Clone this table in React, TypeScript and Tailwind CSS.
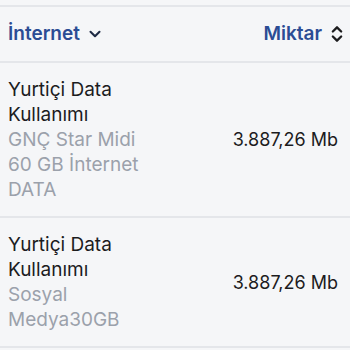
import { ChevronDown, ChevronsUpDown } from "lucide-react";

interface UsageRow {
    title: string;
    detail: string;
    amount: string;
}

const rows: UsageRow[] = [
    { title: "Yurtiçi Data Kullanımı", detail: "GNÇ Star Midi 60 GB İnternet DATA", amount: "3.887,26 Mb" },
    { title: "Yurtiçi Data Kullanımı", detail: "Sosyal Medya30GB", amount: "3.887,26 Mb" },
];

export default function App() {
    return (
        <div className="w-[350px] h-[350px] overflow-hidden bg-[#f5f6f8] pt-[5px]" style={{ fontFamily: "Inter, 'Noto Sans', sans-serif" }}>
            <div className="border-t-2 border-[#e4e6ea]">
                <div className="flex items-center justify-between h-[56px] pl-2 pr-[3px] border-b-2 border-[#e4e6ea] text-[#2b4c94] text-[19px] font-semibold">
                    <div className="flex items-center gap-[6px]">
                        <span>İnternet</span>
                        <ChevronDown className="w-[18px] h-[18px] text-[#1e2a44]" strokeWidth={2.75} />
                    </div>
                    <div className="flex items-center gap-[5px]">
                        <span>Miktar</span>
                        <ChevronsUpDown className="w-5 h-5 text-[#1c1c1e]" strokeWidth={2.75} />
                    </div>
                </div>
                {rows.map((row, i) => (
                    <div key={i} className="flex items-center justify-between pl-2 pr-3 pt-[14px] pb-[14px] border-b-2 border-[#e4e6ea] leading-[25px]">
                        <div className="w-[142px] text-[19px]">
                            <p className="text-[#1c1c1e]">{row.title}</p>
                            <p className="text-[#9ba1ab]">{row.detail}</p>
                        </div>
                        <p className="text-[#1c1c1e] text-[18px]">{row.amount}</p>
                    </div>
                ))}
            </div>
        </div>
    );
}
